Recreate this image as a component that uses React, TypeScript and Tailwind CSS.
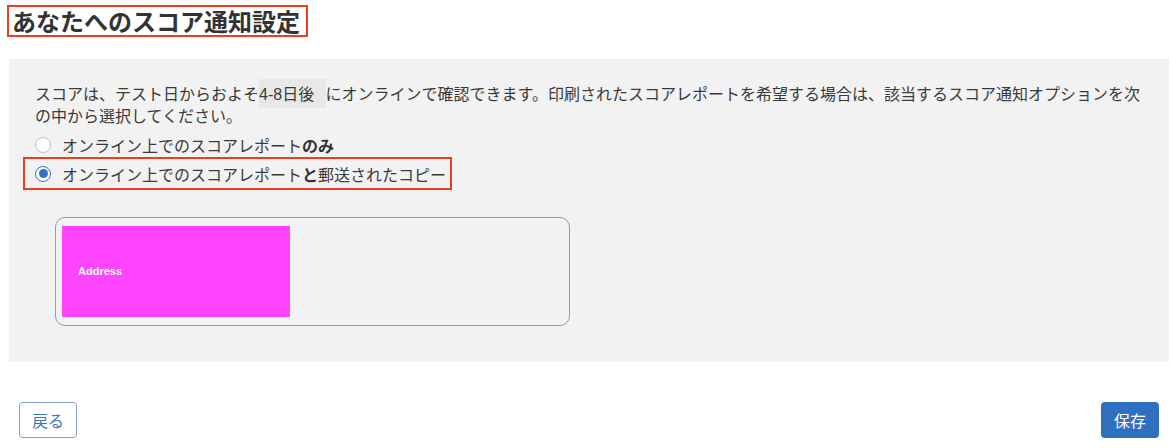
const JP = "font-['Noto_Sans_CJK_JP',sans-serif]";

function Radio({ checked }: { checked?: boolean }) {
  if (checked) {
    return (
      <span className="flex h-[16px] w-[16px] shrink-0 items-center justify-center rounded-full border-[1.5px] border-[#3573c7] bg-white">
        <span className="h-[9px] w-[9px] rounded-full bg-[#3573c7]" />
      </span>
    );
  }
  return (
    <span className="h-[16px] w-[16px] shrink-0 rounded-full border border-[#c4c4c4] bg-white" />
  );
}

export default function App() {
  return (
    <div className={`h-[448px] w-[1172px] overflow-hidden bg-white text-[#333] ${JP}`}>
      {/* title */}
      <div className="pl-[7px] pt-[5px]">
        <h1 className="inline-block h-[32px] border-2 border-[#f03b1c] pl-[3px] pr-[6px] text-[24px] font-bold leading-[28px] text-[#333]">
          あなたへのスコア通知設定
        </h1>
      </div>

      {/* options panel */}
      <div className="ml-[9px] mt-[22px] h-[303px] w-[1160px] bg-[#f2f2f2] pl-[26px] pr-[20px] pt-[23px]">
        <p className="text-[16px] leading-[22px] text-[#3a3a3a]">
          スコアは、テスト日からおよそ
          <span className="bg-[#e8e8e8] pb-[5px] pt-[7px] pr-[7px] font-['Liberation_Sans','Noto_Sans_CJK_JP',sans-serif] leading-[14px]">
            4-8日後{" "}
          </span>
          にオンラインで確認できます。印刷されたスコアレポートを希望する場合は、該当するスコア通知オプションを次の中から選択してください。
        </p>

        <label className="mt-[5px] flex h-[28px] items-center gap-[11px] text-[16px] text-[#3a3a3a]">
          <Radio />
          <span>
            オンライン上でのスコアレポート<b className="font-bold text-[#333]">のみ</b>
          </span>
        </label>

        <div className="-ml-[12px] -mt-[3px] inline-flex border-2 border-[#f03b1c] pl-[10px] pr-[4px] pt-[1px]">
          <label className="flex h-[28px] items-center gap-[11px] text-[16px] text-[#3a3a3a]">
            <Radio checked />
            <span>
              オンライン上でのスコアレポート<b className="font-bold text-[#333]">と</b>郵送されたコピー
            </span>
          </label>
        </div>

        {/* address */}
        <div className="ml-[20px] mt-[27px] h-[109px] w-[515px] rounded-[10px] border-[1.5px] border-[#80a0c9] pl-[6px] pt-[8px]">
          <div className="flex h-[91px] w-[228px] items-center bg-[#ff44ff] pl-[16px]">
            <span className="font-['Liberation_Sans',sans-serif] text-[11px] font-bold text-white">
              Address
            </span>
          </div>
        </div>
      </div>

      {/* actions */}
      <div className="mt-[40px] flex justify-between pl-[19px] pr-[13px]">
        <button className="h-[36px] w-[58px] rounded-[4px] border-[1.5px] border-[#7f9fca] bg-white text-[16px] text-[#3a74c2]">
          戻る
        </button>
        <button className="h-[36px] w-[58px] rounded-[4px] bg-[#2f6fbf] text-[16px] text-white">
          保存
        </button>
      </div>
    </div>
  );
}
